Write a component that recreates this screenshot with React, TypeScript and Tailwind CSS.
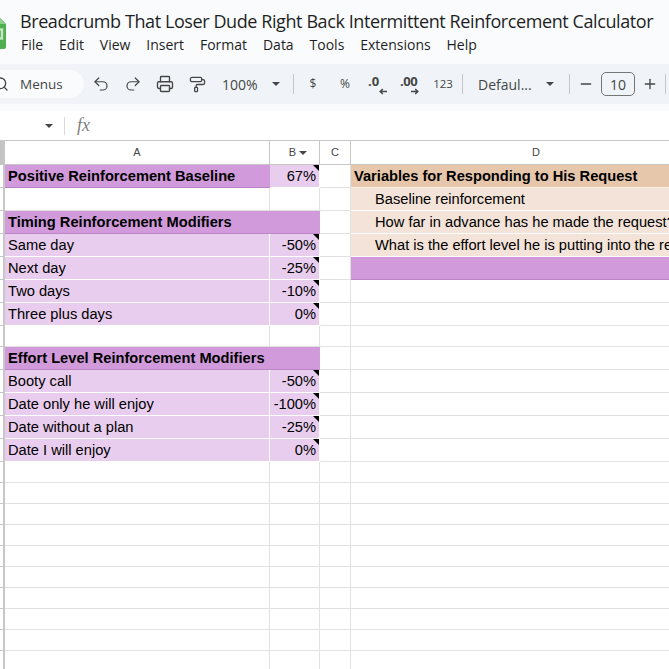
import { Undo2, Redo2, Printer, PaintRoller, Search, Minus, Plus } from "lucide-react";

const sans = "font-['Liberation_Sans',Arial,sans-serif]";

const menus = ["File", "Edit", "View", "Insert", "Format", "Data", "Tools", "Extensions", "Help"];

const Caret = ({ className = "" }: { className?: string }) => (
  <span className={`h-0 w-0 border-x-[4.5px] border-t-[4.5px] border-x-transparent border-t-[#444746] ${className}`} />
);

const Sep = () => <span className="block h-5 w-px shrink-0 bg-[#c7c7c7]" />;

const Slot = ({ children }: { children: React.ReactNode }) => (
  <div className="flex h-8 w-8 shrink-0 items-center justify-center text-[#444746]">{children}</div>
);

const Arrow = ({ right }: { right?: boolean }) => (
  <svg width="8" height="7" viewBox="0 0 8 7" className="absolute bottom-[-1px] right-[-1px]" fill="none" stroke="#444746" strokeWidth="1.5">
    {right ? <path d="M0 3.5h6.5M4.2 1l2.6 2.5L4.2 6" /> : <path d="M8 3.5H1.5M3.8 1L1.2 3.5 3.8 6" />}
  </svg>
);

const SheetsLogo = () => (
  <svg width="24" height="32" viewBox="0 0 24 32" className="ml-[-18px] mt-[17px] shrink-0">
    <path d="M2 0h15l7 7v23a2 2 0 0 1-2 2H2a2 2 0 0 1-2-2V2a2 2 0 0 1 2-2z" fill="#4fae4f" />
    <path d="M17 0l7 7h-7z" fill="#8ccf8c" />
    <rect x="9" y="12.5" width="11" height="9" fill="none" stroke="#c6e6c4" strokeWidth="2.4" />
  </svg>
);

type Kind = "none" | "dark" | "light" | "orange" | "peach";

const kinds: Record<Kind, string> = {
  none: "border-b-[#e1e1e1] border-r-[#e1e1e1]",
  dark: "bg-[#d19bdb] border-b-[#bb84c6] border-r-[#d19bdb]",
  light: "bg-[#e9cdee] border-b-white border-r-white",
  orange: "bg-[#e6c7ac] border-b-[#f7ece3] border-r-[#e6c7ac]",
  peach: "bg-[#f3e3d8] border-b-white border-r-[#f3e3d8]",
};

const Cell = ({
  w,
  kind = "none",
  bold,
  right,
  note,
  indent,
  children,
}: {
  w: string;
  kind?: Kind;
  bold?: boolean;
  right?: boolean;
  note?: boolean;
  indent?: boolean;
  children?: React.ReactNode;
}) => (
  <div
    className={`relative flex h-full shrink-0 items-center whitespace-nowrap border-b border-r text-[14.67px] text-black ${w} ${kinds[kind]} ${
      bold ? "font-bold" : ""
    } ${right ? "justify-end pr-[3px]" : indent ? "pl-6" : "pl-[3px]"}`}
  >
    {children}
    {note && (
      <span className="absolute right-0 top-0 h-0 w-0 border-l-[6px] border-t-[6px] border-l-transparent border-t-black" />
    )}
  </div>
);

type RowData = {
  h: string;
  a?: string;
  aKind?: Kind;
  aBold?: boolean;
  b?: string;
  bKind?: Kind;
  d?: string;
  dKind?: Kind;
  dBold?: boolean;
};

const rows: RowData[] = [
  { h: "h-[23px]", a: "Positive Reinforcement Baseline", aKind: "dark", aBold: true, b: "67%", bKind: "light", d: "Variables for Responding to His Request", dKind: "orange", dBold: true },
  { h: "h-[23px]", d: "Baseline reinforcement", dKind: "peach" },
  { h: "h-[23px]", a: "Timing Reinforcement Modifiers", aKind: "dark", aBold: true, bKind: "dark", d: "How far in advance has he made the request?", dKind: "peach" },
  { h: "h-[23px]", a: "Same day", aKind: "light", b: "-50%", bKind: "light", d: "What is the effort level he is putting into the request?", dKind: "peach" },
  { h: "h-[23px]", a: "Next day", aKind: "light", b: "-25%", bKind: "light", dKind: "dark" },
  { h: "h-[23px]", a: "Two days", aKind: "light", b: "-10%", bKind: "light" },
  { h: "h-[23px]", a: "Three plus days", aKind: "light", b: "0%", bKind: "light" },
  { h: "h-[21px]" },
  { h: "h-[23px]", a: "Effort Level Reinforcement Modifiers", aKind: "dark", aBold: true, bKind: "dark" },
  { h: "h-[23px]", a: "Booty call", aKind: "light", b: "-50%", bKind: "light" },
  { h: "h-[23px]", a: "Date only he will enjoy", aKind: "light", b: "-100%", bKind: "light" },
  { h: "h-[23px]", a: "Date without a plan", aKind: "light", b: "-25%", bKind: "light" },
  { h: "h-[23px]", a: "Date I will enjoy", aKind: "light", b: "0%", bKind: "light" },
  ...Array.from({ length: 10 }, () => ({ h: "h-[21px]" })),
];

export default function App() {
  return (
    <div className={`flex h-[669px] w-[669px] flex-col overflow-hidden bg-white ${sans}`}>
      <header className="flex h-16 shrink-0 bg-[#f9fbfd]">
        <SheetsLogo />
        <div className="ml-[14px] min-w-0 flex-1 font-['Open_Sans',sans-serif]">
          <h1 className="mt-[9px] whitespace-nowrap text-[18px] leading-6 tracking-[-0.41px] text-[#1f1f1f]">
            Breadcrumb That Loser Dude Right Back Intermittent Reinforcement Calculator
          </h1>
          <nav className="mt-[2px] ml-px flex gap-[15.9px] text-[14px] leading-5 text-[#1f1f1f]">
            {menus.map((m) => (
              <span key={m}>{m}</span>
            ))}
          </nav>
        </div>
      </header>

      <div className="flex h-10 shrink-0 items-center whitespace-nowrap bg-[#f0f4f9] text-[#444746]">
        <div className="ml-[-24px] flex h-7 w-[108px] shrink-0 items-center rounded-full bg-[#f9fbfd] pl-[17px]">
          <Search size={16} strokeWidth={2} className="shrink-0" />
          <span className="ml-[11px] font-['Open_Sans',sans-serif] text-[13.5px]">Menus</span>
        </div>
        <div className="ml-px flex items-center">
          <Slot><Undo2 size={18} strokeWidth={1.6} /></Slot>
          <Slot><Redo2 size={18} strokeWidth={1.6} /></Slot>
          <Slot><Printer size={18} strokeWidth={1.8} /></Slot>
          <Slot><PaintRoller size={17} strokeWidth={1.8} /></Slot>
        </div>
        <span className="ml-[9px] w-[36px] font-['Open_Sans',sans-serif] text-[14px]">100%</span>
        <Caret className="ml-[14px] mr-[13px]" />
        <Sep />
        <div className="ml-[3px] flex items-center font-['Open_Sans',sans-serif] text-[12px]">
          <Slot>$</Slot>
          <Slot>%</Slot>
          <Slot>
            <span className="relative h-5 w-[18px] text-left text-[13px] font-bold leading-[15px]">.0<Arrow /></span>
          </Slot>
          <Slot>
            <span className="relative h-5 w-[18px] text-left text-[13px] font-bold leading-[15px] tracking-[-0.5px]">.00<Arrow right /></span>
          </Slot>
          <div className="ml-[2px]">
            <Slot><span className="text-[11.5px]">123</span></Slot>
          </div>
        </div>
        <span className="ml-[3px]"><Sep /></span>
        <span className="ml-[15px] w-[55px] font-['Open_Sans',sans-serif] text-[14px]">Defaul...</span>
        <Caret className="ml-[13px] mr-[15px]" />
        <Sep />
        <Minus size={16} strokeWidth={2} className="ml-[8px] shrink-0" />
        <div className="ml-[7px] flex h-6 w-[34px] shrink-0 items-center justify-center rounded-[5px] border border-[#747775] font-['Open_Sans',sans-serif] text-[14px]">10</div>
        <Plus size={16} strokeWidth={2} className="ml-[7px] shrink-0" />
        <span className="ml-[7px]"><Sep /></span>
      </div>

      <div className="h-[7px] shrink-0 bg-[#f9fbfd]" />

      <div className="flex h-[29px] shrink-0 items-center">
        <Caret className="ml-[45px]" />
        <span className="ml-[11px] h-[18px] w-px bg-[#d9d9d9]" />
        <span className="ml-[12px] font-['Liberation_Serif',serif] text-[18px] italic text-[#808080]">fx</span>
      </div>

      <div className="flex h-[25px] shrink-0 border-y border-y-[#c7c7c7] text-[11px] text-[#444746]">
        <div className="w-[5px] shrink-0 border-r border-r-[#c7c7c7] bg-[#c4c4c4]" />
        <div className="flex w-[265px] shrink-0 items-center justify-center border-r border-r-[#c7c7c7]">A</div>
        <div className="flex w-[50px] shrink-0 items-center justify-center gap-[3px] border-r border-r-[#c7c7c7] pl-[7px]">
          B<Caret className="border-x-[4px] border-t-[4px]" />
        </div>
        <div className="flex w-[31px] shrink-0 items-center justify-center border-r border-r-[#c7c7c7]">C</div>
        <div className="flex w-[370px] shrink-0 items-center justify-center">D</div>
      </div>

      <div className="flex flex-col">
        {rows.map((r, i) => (
          <div key={i} className={`flex shrink-0 ${r.h}`}>
            <div className="h-full w-[5px] shrink-0 border-b border-r-2 border-b-[#c7c7c7] border-r-[#c7c7c7]" />
            <Cell w="w-[265px]" kind={r.aKind} bold={r.aBold}>{r.a}</Cell>
            <Cell w="w-[50px]" kind={r.bKind} right note={!!r.b}>{r.b}</Cell>
            <Cell w="w-[31px]" />
            <Cell w="w-[370px]" kind={r.dKind} bold={r.dBold} indent={r.dKind === "peach"}>{r.d}</Cell>
          </div>
        ))}
      </div>
    </div>
  );
}
